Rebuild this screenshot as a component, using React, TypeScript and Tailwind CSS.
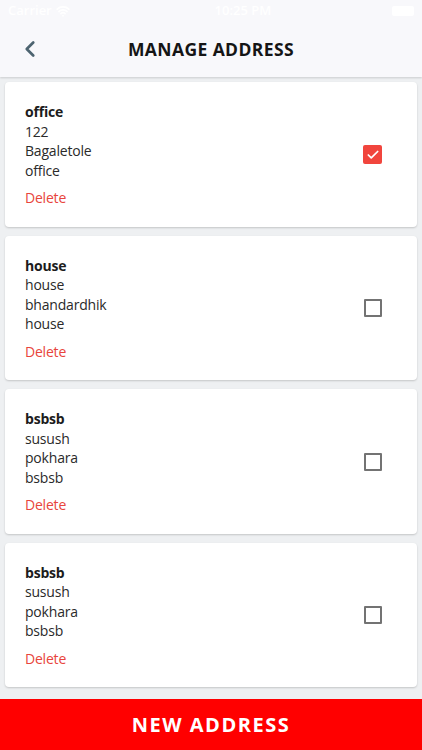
import { ChevronLeft, Check, Wifi } from "lucide-react";

type Address = {
  title: string;
  lines: string[];
  selected: boolean;
};

const addresses: Address[] = [
  { title: "office", lines: ["122", "Bagaletole", "office"], selected: true },
  { title: "house", lines: ["house", "bhandardhik", "house"], selected: false },
  { title: "bsbsb", lines: ["susush", "pokhara", "bsbsb"], selected: false },
  { title: "bsbsb", lines: ["susush", "pokhara", "bsbsb"], selected: false },
];

function AddressCard({ a }: { a: Address }) {
  return (
    <div className="flex items-center justify-between rounded-[4px] bg-white pl-5 pr-[35px] pt-5 pb-[19px] shadow-[0_1px_2px_rgba(0,0,0,0.18)]">
      <div className="text-[14px] leading-[19.5px] tracking-[-0.2px] text-[#2a2a2a]">
        <p className="font-bold text-[#1c1c1c]">{a.title}</p>
        {a.lines.map((l, i) => (
          <p key={i}>{l}</p>
        ))}
        <p className="mt-2 text-[#e8453c]">Delete</p>
      </div>
      {a.selected ? (
        <div className="flex h-[19px] w-[19px] items-center justify-center rounded-[2px] bg-[#f1453d]">
          <Check className="h-[14px] w-[14px] text-white" strokeWidth={3} />
        </div>
      ) : (
        <div className="h-[18px] w-[18px] rounded-[1px] border-2 border-[#737373]" />
      )}
    </div>
  );
}

export default function App() {
  return (
    <div
      className="flex h-[750px] w-[422px] flex-col overflow-hidden bg-[#eef0f2]"
      style={{ fontFamily: '"Open Sans", "Noto Sans", sans-serif' }}
    >
      {/* Header */}
      <div className="relative z-10 bg-[#f8f8fb] shadow-[0_1px_2px_rgba(0,0,0,0.15)]">
        <div className="flex h-[22px] items-center justify-between px-2 text-[13px] font-semibold text-white">
          <div className="flex items-center gap-1">
            <span>Carrier</span>
            <Wifi className="h-3.5 w-3.5" strokeWidth={3} />
          </div>
          <span className="pl-6">10:25 PM</span>
          <div className="h-[10px] w-[22px] rounded-[2px] bg-white" />
        </div>
        <div className="relative flex h-[55px] items-center justify-center">
          <ChevronLeft
            className="absolute left-[17px] top-[14px] h-[26px] w-[26px] text-[#4d6470]"
            strokeWidth={2.5}
          />
          <h1 className="text-[17.5px] font-bold tracking-[0.4px] text-[#151515]">MANAGE ADDRESS</h1>
        </div>
      </div>

      {/* List */}
      <div className="flex flex-1 flex-col gap-[9px] overflow-hidden px-[5px] pt-[5px]">
        {addresses.map((a, i) => (
          <AddressCard key={i} a={a} />
        ))}
      </div>

      {/* Footer button */}
      <button className="flex h-[51px] w-full shrink-0 items-center justify-center bg-[#ff0000] text-[20px] font-bold tracking-[1.5px] text-white">
        NEW ADDRESS
      </button>
    </div>
  );
}
